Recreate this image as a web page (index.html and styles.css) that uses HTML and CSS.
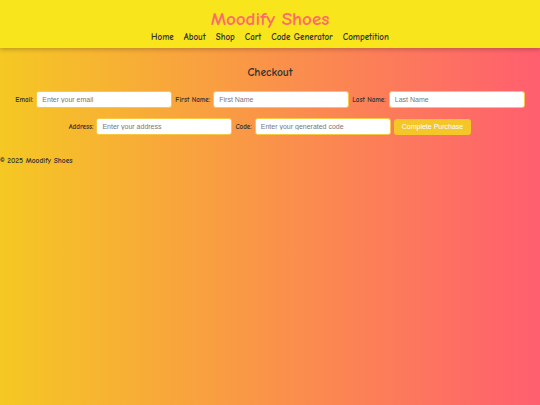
FILE: index.html
```html
<!DOCTYPE html>
<html lang="en">
<head>
    <meta charset="UTF-8">
    <title>Checkout - Moodify Shoes</title>
    <link rel="stylesheet" href="styles.css">
</head>
<body>
    <header class="header">
        <h1 class="logo">Moodify Shoes</h1>
        <nav class="nav">
            <a href="#">Home</a>
            <a href="#">About</a>
            <a href="#">Shop</a>
            <a href="#">Cart</a>
            <a href="#">Code Generator</a>
            <a href="#">Competition</a>
        </nav>
    </header>

    <main class="checkout">
        <h2>Checkout</h2>
        <form class="checkout-form">
            <div class="row">
                <label for="email">Email:</label>
                <input type="email" id="email" placeholder="Enter your email">
                <label for="firstName">First Name:</label>
                <input type="text" id="firstName" placeholder="First Name">
                <label for="lastName">Last Name:</label>
                <input type="text" id="lastName" placeholder="Last Name">
            </div>
            <div class="row">
                <label for="address">Address:</label>
                <input type="text" id="address" placeholder="Enter your address">
                <label for="code">Code:</label>
                <input type="text" id="code" placeholder="Enter your generated code">
                <button type="button" class="btn">Complete Purchase</button>
            </div>
        </form>
    </main>

    <footer class="footer">
        <p>&copy; 2025 Moodify Shoes</p>
    </footer>
</body>
</html>
```

FILE: styles.css
```css
html {
    min-height: 100%;
}
body {
    margin: 0;
    min-height: 100vh;
    font-family: "Comic Sans MS", "Comic Neue", "DejaVu Sans", sans-serif;
    color: #333;
    background: linear-gradient(to right, #f5c823, #ff5e6f);
}

.header {
    background-color: #f8e51c;
    box-shadow: 0 2px 4px rgba(0,0,0,0.2);
    text-align: center;
    padding: 7px 0 5px;
}
.logo {
    margin: 0;
    font-size: 19px;
    line-height: 24px;
    color: #ff6b6b;
}
.nav {
    display: flex;
    justify-content: center;
    gap: 10px;
}
.nav a {
    color: #333;
    text-decoration: none;
    font-weight: bold;
    font-size: 9px;
    line-height: 12px;
}

.checkout {
    text-align: center;
    padding: 17px 14px 0;
}
.checkout h2 {
    margin: 0 0 10px;
    font-size: 11.5px;
    line-height: 16px;
}
.row {
    display: flex;
    justify-content: center;
    align-items: center;
    gap: 3px;
    margin-bottom: 10px;
}
label {
    font-size: 7px;
    font-weight: bold;
}
input {
    width: 136px;
    height: 17px;
    box-sizing: border-box;
    padding: 0 5px;
    border: 1px solid #f7c843;
    border-radius: 3px;
    background: #fff;
    font-family: "Liberation Sans", Arial, sans-serif;
    font-size: 7px;
}
input::placeholder {
    color: #777;
}
.btn {
    height: 16px;
    padding: 0 8px;
    border: none;
    border-radius: 3px;
    background-color: #f4c628;
    color: #fff;
    font-family: "Liberation Sans", Arial, sans-serif;
    font-size: 7px;
}

.footer p {
    margin: 21px 0 0;
    font-size: 7.5px;
    font-weight: bold;
}
```
